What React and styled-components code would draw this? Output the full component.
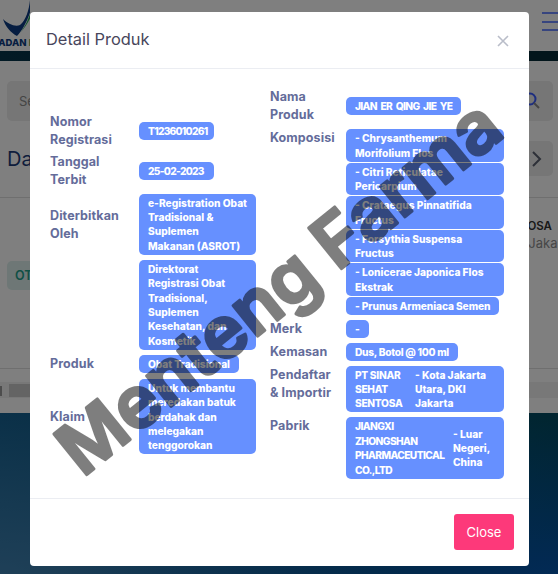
import React from "react";
import styled, { createGlobalStyle } from "styled-components";

const Global = createGlobalStyle`
  html, body { margin: 0; padding: 0; background: #fff; }
  body { font-family: Inter, "Noto Sans", sans-serif; }
  * { box-sizing: border-box; }
`;

const Page = styled.div`
  position: relative;
  width: 558px;
  height: 574px;
  overflow: hidden;
  background: #fff;
  display: flex;
  flex-direction: column;
`;
const TopBar = styled.header`
  height: 51px;
  flex: none;
  background: #fff;
  display: flex;
  justify-content: space-between;
  overflow: hidden;
`;
const Logo = styled.div`
  width: 30px;
  position: relative;
  height: 51px;
  overflow: hidden;
`;
const LogoMark = styled.svg`
  display: block;
  width: 40px;
  height: 37px;
`;
const LogoText = styled.span`
  position: absolute;
  left: -8px;
  top: 37px;
  font: 800 9.5px "Inter", sans-serif;
  white-space: nowrap;
  color: #0d3b82;
`;
const LogoAccent = styled.span`
  color: #25955a;
`;
const Burger = styled.div`
  width: 16px;
  display: flex;
  flex-direction: column;
  gap: 6.5px;
  padding-top: 12px;
`;
const BurgerLine = styled.i`
  display: block;
  height: 2px;
  width: 16px;
  background: #6f8aff;
`;
const DarkBar = styled.div`
  height: 10px;
  flex: none;
  background: linear-gradient(90deg, #04344a, #042a36);
`;
const Main = styled.main`
  flex: 1;
  min-height: 0;
  padding: 20px 5px 0 7px;
  display: flex;
  flex-direction: column;
`;
const SearchBox = styled.div`
  height: 40px;
  flex: none;
  background: #ececec;
  border-radius: 5px;
  padding: 0 12px;
  display: flex;
  align-items: center;
  justify-content: space-between;
  font-size: 13px;
  color: #8a8a8a;
`;
const TitleRow = styled.div`
  display: flex;
  flex: none;
  justify-content: space-between;
  align-items: center;
  height: 35px;
  margin-top: 20px;
`;
const PageTitle = styled.h2`
  margin: 0;
  font-size: 20px;
  font-weight: 400;
  color: #1c3a78;
`;
const Pager = styled.div`
  width: 32px;
  height: 35px;
  background: #ececec;
  border-radius: 5px;
  display: flex;
  align-items: center;
  justify-content: center;
`;
const Rule = styled.div`
  height: 1px;
  flex: none;
  background: #dfdfdf;
  margin: ${(p) => p.$m} -5px 0 -7px;
`;
const DataRow = styled.div`
  display: flex;
  flex: none;
  justify-content: space-between;
  margin-top: 20px;
  height: 60px;
`;
const TypeBadge = styled.div`
  background: #dcefec;
  color: #23a08d;
  width: 60px;
  height: 29px;
  border-radius: 5px;
  margin-top: 43px;
  padding: 7px 8px;
  font-size: 12.5px;
  font-weight: 600;
`;
const Cell = styled.div`
  width: 56px;
  font-size: 11.5px;
  line-height: 17px;
  color: #333;
  font-weight: 600;
  white-space: nowrap;
`;
const CellSub = styled.div`
  color: #8d8d8d;
  font-size: 13px;
  font-weight: 400;
`;
const PagerBar = styled.div`
  display: flex;
  flex: none;
  margin: 13px -5px 0 -7px;
  height: 16px;
  gap: 7px;
  background: #f1f1f1;
`;
const PagerBlock = styled.div`
  width: 60px;
  margin: 2px 0 1px;
  background: #c8c8c8;
`;
const PagerTick = styled.div`
  width: 2px;
  margin: 4px 0 2px;
  background: #9a9a9a;
`;
const Footer = styled.footer`
  height: 161px;
  flex: none;
  background:
    radial-gradient(120% 130% at 100% 100%, rgb(4, 84, 170), rgba(4, 84, 170, 0) 75%),
    radial-gradient(90% 130% at 0% 100%, rgb(62, 128, 176), rgba(62, 128, 176, 0) 80%),
    linear-gradient(90deg, #146090, #024a60);
`;
const Backdrop = styled.div`
  position: absolute;
  inset: 0;
  background: rgba(0, 0, 0, 0.5);
`;
const Modal = styled.section`
  position: absolute;
  left: 30px;
  top: 12px;
  width: 499px;
  height: 554px;
  background: #fff;
  border-radius: 4px;
  display: flex;
  flex-direction: column;
`;
const ModalHead = styled.div`
  height: 57px;
  flex: none;
  border-bottom: 1px solid #ebedf2;
  padding: 0 20px 2px 16px;
  display: flex;
  align-items: center;
  justify-content: space-between;
`;
const ModalTitle = styled.h5`
  margin: 0;
  font-size: 16.4px;
  font-weight: 400;
  color: #48465b;
`;
const CloseX = styled.svg`
  width: 12px;
  height: 12px;
  margin-top: 3px;
  stroke: #b9bdc9;
  stroke-width: 1.6;
  fill: none;
`;
const ModalBody = styled.div`
  flex: 1;
  display: flex;
  align-items: center;
  padding: 0 25px 0 20px;
  gap: 14px;
`;
const Col = styled.div`
  width: ${(p) => p.$w}px;
  flex: none;
  display: flex;
  flex-direction: column;
`;
const Row = styled.div`
  display: grid;
  grid-template-columns: ${(p) => p.$label}px 1fr;
  align-items: ${(p) => p.$align || "center"};
  margin-top: ${(p) => p.$mt || 0}px;
`;
const Label = styled.div`
  font-size: 12.5px;
  line-height: 18px;
  font-weight: 700;
  color: #646c9a;
  letter-spacing: 0.1px;
  margin-top: ${(p) => p.$mt || 0}px;
`;
const Stack = styled.div`
  display: flex;
  flex-direction: column;
  align-items: flex-start;
  gap: ${(p) => p.$gap || 1}px;
`;
const Pill = styled.span`
  display: ${(p) => (p.$flex ? "flex" : "inline-block")};
  width: ${(p) => (p.$w ? p.$w + "px" : "auto")};
  padding: 2px 9px 1.6px;
  background: #6690ff;
  color: #fff;
  border-radius: 5px;
  font-size: 10.2px;
  line-height: 14.4px;
  font-weight: 800;
  letter-spacing: ${(p) => p.$ls || 0}px;
  word-spacing: ${(p) => p.$ws || 0}px;
  align-items: center;
  white-space: nowrap;
`;
const PillCol = styled.span`
  display: block;
  width: ${(p) => p.$w}px;
  flex: none;
  letter-spacing: ${(p) => p.$ls || 0}px;
`;
const ModalFoot = styled.div`
  height: 68px;
  flex: none;
  border-top: 1px solid #ebedf2;
  padding: 15px 15px 0 0;
  display: flex;
  justify-content: flex-end;
`;
const CloseBtn = styled.button`
  width: 60px;
  height: 36px;
  border: 0;
  border-radius: 3px;
  background: #fd397a;
  color: #fff;
  font: 400 13px Inter, sans-serif;
`;
const Watermark = styled.svg`
  position: absolute;
  left: 0;
  top: 0;
  width: 558px;
  height: 574px;
  pointer-events: none;
  opacity: 0.5;
`;
const WatermarkText = styled.text`
  font-family: Inter, sans-serif;
  font-size: 72px;
  font-weight: 600;
  fill: #000;
  stroke: #000;
  stroke-width: 3px;
  stroke-linejoin: round;
  stroke-linecap: round;
  text-anchor: middle;
`;

export default function App() {
  return (
    <>
      <Global />
      <Page>
        <TopBar>
          <Logo>
            <LogoMark viewBox="0 0 40 37">
              <path d="M30 0 C29 10 26 20 20 25 C15 27 8 24 3 19 C5 26 11 33 17 36 C24 29 31 14 33 0 Z" fill="#0d3b82" />
              <path d="M33 0 C32 12 26 26 20 33 C28 25 34 12 36 0 Z" fill="#25a55a" />
            </LogoMark>
            <LogoText>BADAN <LogoAccent>POM</LogoAccent></LogoText>
          </Logo>
          <Burger>
            <BurgerLine />
            <BurgerLine />
            <BurgerLine />
          </Burger>
        </TopBar>
        <DarkBar />
        <Main>
          <SearchBox>
            <span>Search</span>
            <svg width="18" height="18" viewBox="0 0 18 18" fill="none" stroke="#3b5bff" strokeWidth="2">
              <circle cx="7" cy="7" r="5.5" />
              <path d="M11 11l5 5" stroke="#8a8a8a" />
            </svg>
          </SearchBox>
          <TitleRow>
            <PageTitle>Daftar Produk</PageTitle>
            <Pager>
              <svg width="10" height="16" viewBox="0 0 10 16" fill="none" stroke="#5b6070" strokeWidth="2">
                <path d="M1 1l7 7-7 7" />
              </svg>
            </Pager>
          </TitleRow>
          <Rule $m="21px" />
          <DataRow>
            <TypeBadge>OT</TypeBadge>
            <Cell>
              SENTOSA
              <CellSub>Kota Jakarta Utara</CellSub>
            </Cell>
          </DataRow>
          <Rule $m="90px" />
          <PagerBar>
            <PagerTick />
            <PagerBlock />
          </PagerBar>
        </Main>
        <Footer />
        <Backdrop />
        <Modal>
          <ModalHead>
            <ModalTitle>Detail Produk</ModalTitle>
            <CloseX viewBox="0 0 12 12">
              <path d="M1 1l10 10M11 1L1 11" />
            </CloseX>
          </ModalHead>
          <ModalBody>
            <Col $w={206}>
              <Row $label={89}>
                <Label>Nomor<br />Registrasi</Label>
                <Stack><Pill $w={75} $ls={-0.75}>T1236010261</Pill></Stack>
              </Row>
              <Row $label={89} $mt={4}>
                <Label>Tanggal<br />Terbit</Label>
                <Stack><Pill $w={75} $ls={-0.7}>25-02-2023</Pill></Stack>
              </Row>
              <Row $label={89} $mt={5} $align="start">
                <Label $mt={13}>Diterbitkan<br />Oleh</Label>
                <Stack $gap={5}>
                  <Pill $w={117}>e-Registration Obat<br />Tradisional &amp;<br />Suplemen<br />Makanan (ASROT)</Pill>
                  <Pill $w={117}>Direktorat<br />Registrasi Obat<br />Tradisional,<br />Suplemen<br />Kesehatan, dan<br />Kosmetik</Pill>
                </Stack>
              </Row>
              <Row $label={89} $mt={5}>
                <Label>Produk</Label>
                <Stack><Pill $ls={-0.05}>Obat Tradisional</Pill></Stack>
              </Row>
              <Row $label={89} $mt={6}>
                <Label>Klaim</Label>
                <Stack><Pill $w={117}>Untuk membantu<br />meredakan batuk<br />berdahak dan<br />melegakan<br />tenggorokan</Pill></Stack>
              </Row>
            </Col>
            <Col $w={234}>
              <Row $label={76}>
                <Label>Nama<br />Produk</Label>
                <Stack><Pill $ls={-0.65} $ws={2}>JIAN ER QING JIE YE</Pill></Stack>
              </Row>
              <Row $label={76} $mt={5} $align="start">
                <Label>Komposisi</Label>
                <Stack>
                  <Pill $w={158}>- Chrysanthemum<br />Morifolium Flos</Pill>
                  <Pill $w={158}>- Citri Reticulatae<br />Pericarpium</Pill>
                  <Pill $w={158}>- Crataegus Pinnatifida<br />Fructus</Pill>
                  <Pill $w={158}>- Forsythia Suspensa<br />Fructus</Pill>
                  <Pill $w={158}>- Lonicerae Japonica Flos<br />Ekstrak</Pill>
                  <Pill $ls={-0.1}>- Prunus Armeniaca Semen</Pill>
                </Stack>
              </Row>
              <Row $label={76} $mt={5}>
                <Label>Merk</Label>
                <Stack><Pill>-</Pill></Stack>
              </Row>
              <Row $label={76} $mt={5}>
                <Label>Kemasan</Label>
                <Stack><Pill $ls={-0.28}>Dus, Botol @ 100 ml</Pill></Stack>
              </Row>
              <Row $label={76} $mt={5} $align="start">
                <Label>Pendaftar<br />&amp; Importir</Label>
                <Stack>
                  <Pill $w={158} $flex>
                    <PillCol $w={60} $ls={-0.3}>PT SINAR<br />SEHAT<br />SENTOSA</PillCol>
                    <PillCol $w={80}>- Kota Jakarta<br />Utara, DKI<br />Jakarta</PillCol>
                  </Pill>
                </Stack>
              </Row>
              <Row $label={76} $mt={5} $align="start">
                <Label>Pabrik</Label>
                <Stack>
                  <Pill $w={158} $flex>
                    <PillCol $w={98} $ls={-0.6}>JIANGXI<br />ZHONGSHAN<br />PHARMACEUTICAL<br />CO.,LTD</PillCol>
                    <PillCol $w={42}>- Luar<br />Negeri,<br />China</PillCol>
                  </Pill>
                </Stack>
              </Row>
            </Col>
          </ModalBody>
          <ModalFoot>
            <CloseBtn>Close</CloseBtn>
          </ModalFoot>
        </Modal>
        <Watermark viewBox="0 0 558 574">
          <WatermarkText x="279" y="312" transform="rotate(-39 279 287)">Menteng Farma</WatermarkText>
        </Watermark>
      </Page>
    </>
  );
}
